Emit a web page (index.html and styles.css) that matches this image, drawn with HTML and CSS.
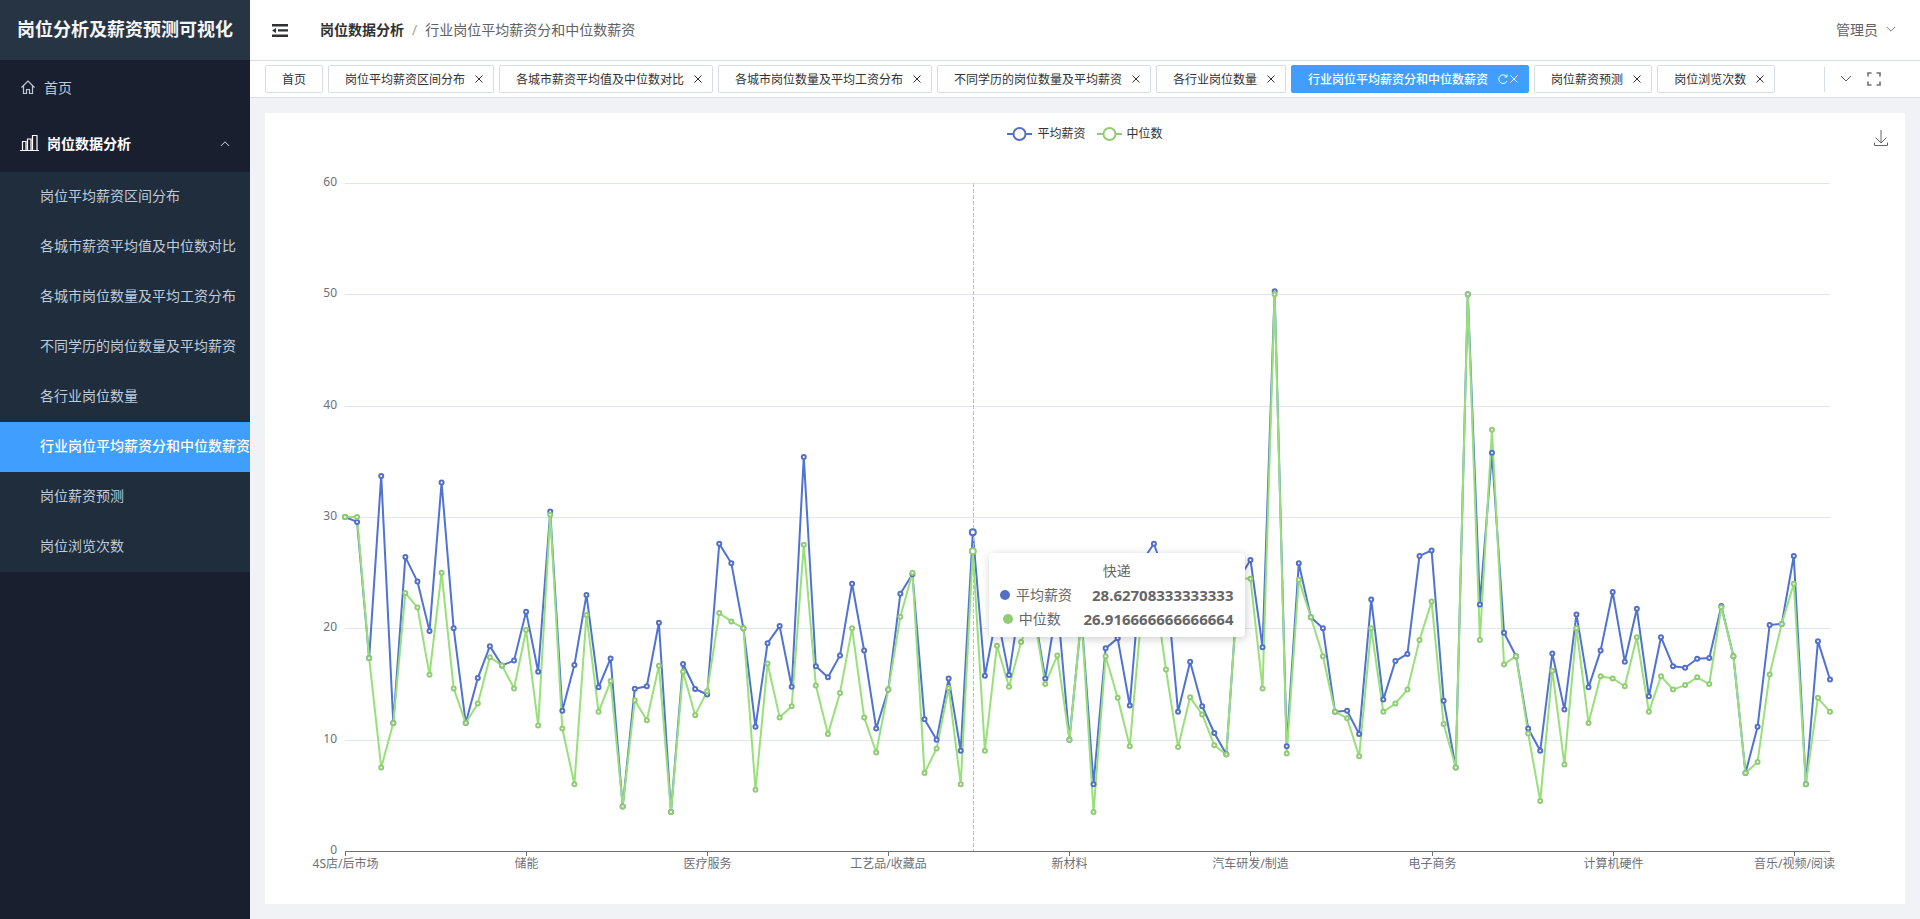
FILE: index.html
```html
<!DOCTYPE html>
<html lang="zh-CN">
<head>
    <meta charset="UTF-8">
    <title>岗位分析及薪资预测可视化</title>
    <meta name="viewport" content="width=device-width, initial-scale=1">
    <link rel="stylesheet" href="styles.css">
</head>
<body>
    <svg class="sprite" aria-hidden="true">
        <symbol id="close" viewBox="0 0 8 8"><path d="M.5 .5l7 7M7.500 .5l-7 7" /></symbol>
        <symbol id="down" viewBox="0 0 12 8"><path d="M1 1l5 5 5-5" /></symbol>
        <symbol id="up" viewBox="0 0 12 8"><path d="M1 7l5-5 5 5" /></symbol>
    </svg>

    <aside class="sidebar">
        <h1 class="logo">岗位分析及薪资预测可视化</h1>
        <nav>
            <a class="menu-item" href="#home">
                <svg class="icon home" width="16" height="16" viewBox="0 0 16 16"><path d="M1.500 8.500L8 2l6.500 6.500M3.500 7v7.500h3V10.500h3v4h3V7" /></svg>
                <span>首页</span>
            </a>
            <button type="button" class="menu-item menu-title">
                <svg class="icon bars" width="19" height="18" viewBox="0 0 19 18"><path d="M0 16.500h19M2.500 16V7.500H6V16M7.500 16V5H11v11M12.500 16V1.500H17V16" /></svg>
                <span>岗位数据分析</span>
                <svg class="icon arrow" width="10" height="7"><use href="#up" /></svg>
            </button>
            <ul class="submenu">
                <li><a href="#range">岗位平均薪资区间分布</a></li>
                <li><a href="#city-salary">各城市薪资平均值及中位数对比</a></li>
                <li><a href="#city-count">各城市岗位数量及平均工资分布</a></li>
                <li><a href="#education">不同学历的岗位数量及平均薪资</a></li>
                <li><a href="#industry-count">各行业岗位数量</a></li>
                <li><a class="active" href="#industry-salary">行业岗位平均薪资分和中位数薪资</a></li>
                <li><a href="#predict">岗位薪资预测</a></li>
                <li><a href="#views">岗位浏览次数</a></li>
            </ul>
        </nav>
    </aside>

    <div class="main">
        <header class="header">
            <button type="button" class="icon-button" aria-label="收起菜单">
                <svg width="16" height="16" viewBox="0 0 16 16"><path class="fold" d="M0 2h16v2.500H0zM6 7.300h10v2.200H6zM0 12.500h16V15H0zM4 6v5L0 8.500z" /></svg>
            </button>
            <nav class="breadcrumb">
                <a href="#analysis">岗位数据分析</a>
                <span class="slash">/</span>
                <span>行业岗位平均薪资分和中位数薪资</span>
            </nav>
            <button type="button" class="user">
                管理员
                <svg class="icon" width="10" height="7"><use href="#down" /></svg>
            </button>
        </header>

        <div class="tabs-bar">
            <div class="tabs">
                <div class="tab"><a href="#home">首页</a></div>
                <div class="tab"><a href="#range">岗位平均薪资区间分布</a><button type="button" aria-label="关闭"><svg class="icon" width="8" height="8"><use href="#close" /></svg></button></div>
                <div class="tab"><a href="#city-salary">各城市薪资平均值及中位数对比</a><button type="button" aria-label="关闭"><svg class="icon" width="8" height="8"><use href="#close" /></svg></button></div>
                <div class="tab"><a href="#city-count">各城市岗位数量及平均工资分布</a><button type="button" aria-label="关闭"><svg class="icon" width="8" height="8"><use href="#close" /></svg></button></div>
                <div class="tab"><a href="#education">不同学历的岗位数量及平均薪资</a><button type="button" aria-label="关闭"><svg class="icon" width="8" height="8"><use href="#close" /></svg></button></div>
                <div class="tab"><a href="#industry-count">各行业岗位数量</a><button type="button" aria-label="关闭"><svg class="icon" width="8" height="8"><use href="#close" /></svg></button></div>
                <div class="tab active"><a href="#industry-salary">行业岗位平均薪资分和中位数薪资</a><button type="button" aria-label="刷新"><svg class="icon" width="10" height="10" viewBox="0 0 10 10"><path d="M9 7A4.300 4.300 0 1 1 8.500 2.500M9 .5V3H6.500" /></svg></button><button type="button" aria-label="关闭"><svg class="icon" width="8" height="8"><use href="#close" /></svg></button></div>
                <div class="tab"><a href="#predict">岗位薪资预测</a><button type="button" aria-label="关闭"><svg class="icon" width="8" height="8"><use href="#close" /></svg></button></div>
                <div class="tab"><a href="#views">岗位浏览次数</a><button type="button" aria-label="关闭"><svg class="icon" width="8" height="8"><use href="#close" /></svg></button></div>
            </div>
            <div class="tab-tools">
                <button type="button" class="icon-button" aria-label="更多"><svg class="icon" width="12" height="8"><use href="#down" /></svg></button>
                <button type="button" class="icon-button" aria-label="全屏"><svg class="icon full" width="14" height="14" viewBox="0 0 14 14"><path d="M1 4.500V1h3.500M9.500 1H13v3.500M13 9.500V13H9.500M4.500 13H1V9.500" /></svg></button>
            </div>
        </div>

        <main class="content">
            <section class="card">
                <div class="legend">
                    <span><svg width="25" height="16" viewBox="0 0 25 16"><path class="blue" d="M0 8h25" /><circle class="blue" cx="12.500" cy="8" r="6" /></svg>平均薪资</span>
                    <span><svg width="25" height="16" viewBox="0 0 25 16"><path class="green" d="M0 8h25" /><circle class="green" cx="12.500" cy="8" r="6" /></svg>中位数</span>
                </div>
                <button type="button" class="icon-button download" aria-label="保存为图片">
                    <svg class="icon" width="16" height="18" viewBox="0 0 16 18"><path d="M8 1v13M2.500 8.500L8 14l5.500-5.500M1.500 13.500v3h13v-3" /></svg>
                </button>
                <svg class="chart" id="chart" role="img" aria-label="行业岗位平均薪资分和中位数薪资"></svg>
                <div class="tooltip" id="tooltip">
                    <div>快递</div>
                    <div class="tooltip-row"><span><i class="dot dot-blue"></i>平均薪资</span><b>28.62708333333333</b></div>
                    <div class="tooltip-row"><span><i class="dot dot-green"></i>中位数</span><b>26.916666666666664</b></div>
                </div>
            </section>
        </main>
    </div>

    <script src="chart.js"></script>
</body>
</html>
```
FILE: styles.css
```css
* {
    box-sizing: border-box;
}
body {
    display: flex;
    min-height: 100vh;
    margin: 0;
    background-color: #f0f2f5;
    color: #303133;
    font-family: "Noto Sans", "Noto Sans CJK SC", sans-serif;
    font-size: 14px;
}
a {
    color: inherit;
    text-decoration: none;
}
button {
    padding: 0;
    border: none;
    background: none;
    color: inherit;
    font: inherit;
    cursor: pointer;
}
svg {
    flex: none;
}
.sprite {
    position: absolute;
    width: 0;
    height: 0;
}
.icon {
    fill: none;
    stroke: currentColor;
    stroke-width: 1;
}

/* sidebar */
.sidebar {
    flex: none;
    width: 250px;
    overflow: hidden;
    background-color: #191f2f;
    color: #bfcbd9;
    white-space: nowrap;
}
.logo {
    height: 60px;
    margin: 0;
    background-color: #273444;
    color: #f5f5f5;
    font-size: 18px;
    line-height: 58px;
    text-align: center;
}
.menu-item {
    display: flex;
    align-items: center;
    gap: 8px;
    width: 100%;
    height: 56px;
    padding: 0 20px 2px;
}
.menu-title {
    color: #fff;
    font-weight: bold;
}
.home,
.bars {
    stroke-width: 1.2;
}
.arrow {
    margin-left: auto;
}
.submenu {
    margin: 0;
    padding: 0;
    background-color: #1f2d3d;
    list-style: none;
}
.submenu a {
    display: block;
    height: 50px;
    padding-left: 40px;
    line-height: 48px;
}
.submenu .active {
    background-color: #409eff;
    color: #fff;
    font-weight: 500;
}

/* header */
.main {
    display: flex;
    flex: 1;
    flex-direction: column;
    min-width: 0;
}
.header {
    display: flex;
    align-items: center;
    height: 61px;
    padding: 0 24px 0 22px;
    border-bottom: 1px solid #d8dce5;
    background-color: #fff;
}
.icon-button {
    display: flex;
}
.fold {
    fill: #303133;
}
.breadcrumb,
.user {
    display: flex;
    align-items: center;
    gap: 8px;
    padding-bottom: 2px;
    color: #606266;
}
.breadcrumb {
    margin-left: 32px;
}
.breadcrumb a {
    color: #303133;
    font-weight: bold;
}
.slash {
    color: #a0a4ac;
}
.user {
    margin-left: auto;
}

/* tabs */
.tabs-bar {
    display: flex;
    align-items: center;
    height: 37px;
    padding: 0 15px;
    border-bottom: 1px solid #d8dce5;
    background-color: #fff;
}
.tabs {
    display: flex;
    flex: 1;
    gap: 5px;
    min-width: 0;
    overflow: hidden;
    white-space: nowrap;
}
.tab {
    display: flex;
    flex: none;
    align-items: center;
    gap: 2px;
    height: 28px;
    padding: 0 10px 0 16px;
    border: 1px solid #d8dce5;
    border-radius: 2px;
    color: #303133;
    font-size: 12px;
}
.tab:first-child {
    padding-right: 16px;
}
.tab a + button {
    margin-left: 8px;
}
.tab button {
    display: flex;
}
.tab.active {
    border-color: #409eff;
    background-color: #409eff;
    color: #fff;
}
.tab.active a {
    font-weight: 500;
}
.tab-tools {
    display: flex;
    align-items: center;
    gap: 15px;
    height: 25px;
    padding: 0 24px 0 15px;
    border-left: 1px solid #d8dce5;
    color: #5a5e66;
}
.full {
    stroke: #6c6f75;
    stroke-width: 1.6;
}

/* chart */
.content {
    display: flex;
    flex: 1;
    padding: 15px;
}
.card {
    position: relative;
    display: flex;
    flex: 1;
    flex-direction: column;
    min-width: 0;
    background-color: #fff;
}
.legend {
    display: flex;
    justify-content: center;
    gap: 11px;
    height: 40px;
    padding-top: 12px;
    color: #333;
    font-size: 12px;
    line-height: 18px;
}
.legend span {
    display: flex;
    align-items: center;
    gap: 5px;
    height: 18px;
}
.blue,
.green {
    fill: #fff;
    stroke: #5470c6;
    stroke-width: 2;
}
.green {
    stroke: #91cc75;
}
.download {
    position: absolute;
    top: 16px;
    right: 16px;
    color: #666;
}
.chart {
    flex: 1;
    width: 100%;
    min-height: 0;
}
.chart text {
    fill: #6e7079;
    font-size: 12px;
}
.grid-line {
    stroke: #e0e6f1;
}
.axis-line {
    stroke: #6e7079;
}
.pointer {
    stroke: #b9bec9;
    stroke-dasharray: 4 2;
}
.line-blue,
.line-green {
    fill: none;
    stroke: #4f72d3;
    stroke-width: 2;
    stroke-linejoin: bevel;
}
.line-green {
    stroke: #98e079;
}
.tooltip {
    position: absolute;
    padding: 11px;
    border-radius: 4px;
    background-color: #fff;
    box-shadow: 1px 2px 10px rgba(0, 0, 0, 0.2);
    color: #666;
    line-height: 14px;
    text-align: center;
    white-space: nowrap;
}
.tooltip-row {
    display: flex;
    gap: 20px;
    margin-top: 10px;
}
.tooltip-row span {
    display: flex;
    flex: 1;
    align-items: center;
    justify-content: center;
}
.tooltip-row b {
    font-size: 15px;
}
.dot {
    width: 10px;
    height: 10px;
    margin-right: 6px;
    border-radius: 50%;
}
.dot-blue {
    background-color: #5470c6;
}
.dot-green {
    background-color: #91cc75;
}
```
FILE: chart.js
```js
const average = [
    30, 29.56, 17.33, 33.69, 11.5, 26.4, 24.2, 19.75, 33.1, 20, 11.5, 15.53, 18.4, 16.67, 17.1,
    21.5, 16.1, 30.5, 12.6, 16.7, 23, 14.7, 17.3, 4, 14.57, 14.8, 20.5, 3.5, 16.8, 14.55,
    14.06, 27.6, 25.84, 20, 11.15, 18.67, 20.2, 14.75, 35.4, 16.6, 15.6, 17.57, 24, 18, 11,
    14.5, 23.1, 24.85, 11.84, 10, 15.5, 9, 28.627, 15.74, 21.3, 15.8, 23, 22, 15.5, 22.3,
    10, 21, 6, 18.2, 19.1, 13.07, 26, 27.6, 24.5, 12.5, 17, 13, 10.6, 8.7, 24.4,
    26.14, 18.3, 50.27, 9.4, 25.84, 21, 20, 12.5, 12.6, 10.5, 22.6, 13.6, 17.06, 17.7, 26.5,
    27, 13.5, 7.5, 50, 22.15, 35.76, 19.6, 17.5, 11, 9, 17.74, 12.7, 21.25, 14.7, 18,
    23.26, 17, 21.76, 13.9, 19.2, 16.6, 16.46, 17.27, 17.33, 22, 17.5, 7, 11.15, 20.3, 20.4,
    26.5, 6, 18.85, 15.4
];
const median = [
    30, 30, 17.33, 7.5, 11.5, 23.17, 21.88, 15.83, 25, 14.6, 11.5, 13.25, 17.4, 16.67, 14.6,
    19.84, 11.27, 30.2, 11, 6, 21.2, 12.5, 15.26, 4, 13.55, 11.75, 16.64, 3.5, 16.1, 12.2,
    14.36, 21.37, 20.62, 20, 5.5, 16.85, 12, 13, 27.5, 14.87, 10.5, 14.2, 20, 12, 8.85,
    14.5, 21.04, 25, 7, 9.2, 14.63, 6, 26.917, 9, 18.44, 14.75, 18.77, 21.6, 15, 17.57,
    10, 21, 3.5, 17.5, 13.76, 9.4, 21.6, 24, 16.3, 9.35, 13.8, 12.26, 9.5, 8.67, 24.5,
    24.46, 14.6, 50, 8.75, 24.37, 21, 17.5, 12.5, 11.93, 8.5, 20, 12.5, 13.25, 14.5, 18.95,
    22.4, 11.4, 7.5, 50, 18.95, 37.83, 16.76, 17.5, 10.55, 4.5, 16.2, 7.76, 20, 11.5, 15.7,
    15.5, 14.8, 19.2, 12.5, 15.7, 14.5, 14.9, 15.6, 15, 21.9, 17.5, 7, 8, 15.86, 20.4,
    24, 6, 13.76, 12.5
];
// one label for every 15 industries
const labels = ['4S店/后市场', '储能', '医疗服务', '工艺品/收藏品', '新材料', '汽车研发/制造', '电子商务', '计算机硬件', '音乐/视频/阅读'];
const hovered = 52;

const chart = document.getElementById('chart');
const tooltip = document.getElementById('tooltip');

function add(name, attrs, text) {
    const el = document.createElementNS('http://www.w3.org/2000/svg', name);
    for (const key in attrs) {
        el.setAttribute(key, attrs[key]);
    }
    if (text !== undefined) {
        el.textContent = text;
    }
    chart.appendChild(el);
}

function draw() {
    chart.innerHTML = '';
    const left = 80;
    const right = chart.clientWidth - 75;
    const top = 30;
    const bottom = chart.clientHeight - 53;
    const x = i => left + (right - left) * i / (average.length - 1);
    const y = v => bottom - (bottom - top) * v / 60;

    for (let v = 0; v <= 60; v += 10) {
        const lineY = Math.round(y(v)) + 0.5;
        add('line', { class: v ? 'grid-line' : 'axis-line', x1: left, x2: right, y1: lineY, y2: lineY });
        add('text', { x: left - 8, y: lineY + 2, 'text-anchor': 'end' }, v);
    }
    labels.forEach((label, i) => {
        const tickX = Math.round(x(i * 15)) + 0.5;
        add('line', { class: 'axis-line', x1: tickX, x2: tickX, y1: bottom, y2: bottom + 5 });
        add('text', { x: tickX, y: bottom + 17, 'text-anchor': 'middle' }, label);
    });

    const series = [[average, 'blue'], [median, 'green']];
    series.forEach(([data, color]) => {
        add('polyline', { class: 'line-' + color, points: data.map((v, i) => x(i) + ',' + y(v)).join(' ') });
    });

    const pointerX = Math.round(x(hovered)) + 0.5;
    add('line', { class: 'pointer', x1: pointerX, x2: pointerX, y1: top, y2: bottom });

    series.forEach(([data, color]) => {
        data.forEach((v, i) => {
            add('circle', { class: color, cx: x(i), cy: y(v), r: i === hovered ? 3 : 2 });
        });
    });

    tooltip.style.left = Math.round(x(hovered) + 16) + 'px';
    tooltip.style.top = Math.round(chart.getBoundingClientRect().top - chart.parentNode.getBoundingClientRect().top + y(average[hovered]) + 21) + 'px';
}

draw();
window.addEventListener('resize', draw);
```
